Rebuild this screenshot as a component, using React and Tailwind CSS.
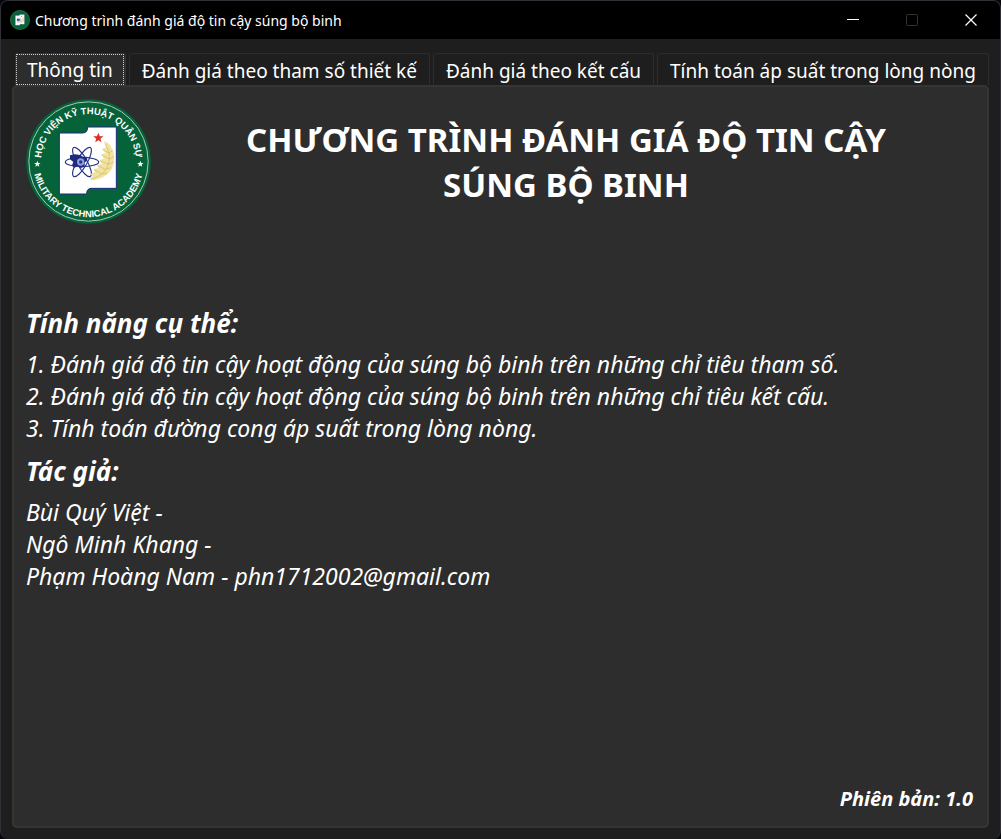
import { useState } from "react";

const TABS = [
  "Thông tin",
  "Đánh giá theo tham số thiết kế",
  "Đánh giá theo kết cấu",
  "Tính toán áp suất trong lòng nòng",
];

const FEATURES = [
  "1. Đánh giá độ tin cậy hoạt động của súng bộ binh trên những chỉ tiêu tham số.",
  "2. Đánh giá độ tin cậy hoạt động của súng bộ binh trên những chỉ tiêu kết cấu.",
  "3. Tính toán đường cong áp suất trong lòng nòng.",
];

const AUTHORS = ["Bùi Quý Việt -", "Ngô Minh Khang -", "Phạm Hoàng Nam - phn1712002@gmail.com"];

const STAR = "M0 -10 L2.6 -3.2 L9.5 -3.1 L4 1.3 L5.9 8.1 L0 4.2 L-5.9 8.1 L-4 1.3 L-9.5 -3.1 L-2.6 -3.2 Z";

function Emblem() {
  return (
    <>
      <path
        d="M118 114 H188 Q203 114 203 96 H289 V280 H213 Q200 281 200 297 H118 Z"
        fill="#ffffff"
        stroke="#1e2a86"
        strokeWidth="3"
      />
      <g fill="none" stroke="#27348b" strokeWidth="3.5">
        <ellipse cx="186" cy="201" rx="50" ry="14" />
        <ellipse cx="186" cy="201" rx="50" ry="15" transform="rotate(60 186 201)" />
        <ellipse cx="186" cy="201" rx="50" ry="15" transform="rotate(120 186 201)" />
      </g>
      <path d="M150 181 L165 178 L181 180 L190 187 L200 185 L202 196 L194 203 L194 214 L183 219 L172 214 L162 219 L156 211 L160 201 L150 193 Z" fill="#1f2b80" />
      <circle cx="182" cy="201" r="11" fill="#8ea0d8" />
      <circle cx="182" cy="201" r="5" fill="#27348b" />
      <path
        d="M252 139 Q270 143 275 160 Q285 177 282 198 Q279 225 260 240 Q243 252 222 256 L208 253 L219 243 L210 238 L225 231 L220 222 L237 220 L232 210 L246 206 L239 195 L252 191 L244 178 L257 174 L247 162 L258 157 Z"
        fill="#f0e3a4"
      />
      <path
        d="M256 146 Q279 184 260 220 Q245 244 214 252 M248 164 L267 174 L279 166 M245 180 L269 192 L282 184 M240 198 L267 208 L280 202 M232 212 L257 223 L272 218 M223 224 L245 237 L261 234"
        fill="none"
        stroke="#d9c266"
        strokeWidth="2.5"
      />
      <path d={STAR} transform="translate(235 129) scale(1.6)" fill="#dc2d27" />
    </>
  );
}

function AcademyLogo({ className, detailed }) {
  return (
    <svg viewBox="18 12 375 375" className={className} role="img" aria-label="Học viện Kỹ thuật Quân sự">
      <circle cx="205.500" cy="199.500" r="187" fill="#066239" />
      <circle cx="205.500" cy="199.500" r="179" fill="none" stroke="#a9c8b6" strokeWidth="3" />
      {detailed && (
        <g
          fill="#ffffff"
          fontFamily="'Liberation Sans', Arial, sans-serif"
          fontWeight="700"
        >
          <path id="arc-top" d="M63 200 A142.500 142.500 0 0 1 348 200" fill="none" />
          <path id="arc-bottom" d="M39 200 A166.500 166.500 0 0 0 372 200" fill="none" />
          <text fontSize="28" textAnchor="middle">
            <textPath href="#arc-top" startOffset="50%">HỌC VIỆN KỸ THUẬT QUÂN SỰ</textPath>
          </text>
          <text fontSize="28" textAnchor="middle">
            <textPath href="#arc-bottom" startOffset="50%">MILITARY TECHNICAL ACADEMY</textPath>
          </text>
          <path d={STAR} transform="translate(52 207)" />
          <path d={STAR} transform="translate(361 207)" />
        </g>
      )}
      <Emblem />
    </svg>
  );
}

function TitleBar() {
  return (
    <header className="flex h-[38px] items-center bg-black pl-[9px]">
      <AcademyLogo className="size-5 shrink-0" />
      <span className="ml-[5px] flex-1 truncate text-[14px]">Chương trình đánh giá độ tin cậy súng bộ binh</span>
      <div className="flex h-full shrink-0">
        <button type="button" aria-label="Thu nhỏ" className="flex w-[58px] items-center justify-center">
          <svg viewBox="0 0 12 12" className="size-3"><path d="M0 5.500H12" stroke="#fff" /></svg>
        </button>
        <button type="button" aria-label="Phóng to" disabled className="flex w-[60px] items-center justify-center">
          <svg viewBox="0 0 12 12" className="size-3"><rect x=".5" y=".5" width="11" height="11" rx="1" fill="none" stroke="#333" /></svg>
        </button>
        <button type="button" aria-label="Đóng" className="flex w-[58px] items-center justify-center">
          <svg viewBox="0 0 12 12" className="size-3"><path d="M.5 .5L11.500 11.500M11.500 .5L.5 11.500" stroke="#fff" strokeWidth="1.200" /></svg>
        </button>
      </div>
    </header>
  );
}

function Section({ title, lines }) {
  return (
    <section className="flex flex-col gap-2">
      <h2 className="text-[26px] leading-[34px] font-bold">{title}</h2>
      <ul className="text-[23px] leading-8">
        {lines.map((line) => (
          <li key={line}>{line}</li>
        ))}
      </ul>
    </section>
  );
}

export default function App() {
  const [active, setActive] = useState(0);
  return (
    <div className="flex min-h-screen flex-col bg-[#05050c] font-['Noto_Sans','Open_Sans',sans-serif] text-white">
      <div className="flex flex-1 flex-col overflow-hidden rounded-lg border border-[#303036] border-b-0 bg-[#1e1e1e]">
        <TitleBar />
        <main className="flex flex-1 flex-col px-[11px] pt-[14px] pb-[11px]">
          <div role="tablist" className="flex gap-[3px] px-[3px]">
            {TABS.map((tab, i) => (
              <button
                key={tab}
                type="button"
                role="tab"
                id={`tab-${i}`}
                aria-selected={active === i}
                aria-controls="panel"
                onClick={() => setActive(i)}
                className={
                  active === i
                    ? "h-8 rounded-t-[3px] border border-[#353535] border-b-0 bg-[#2d2d2d] pr-px text-[19px] whitespace-nowrap"
                    : "h-8 rounded-t-[3px] border border-[#2d2d2d] border-b-0 px-3 pt-[3px] text-[19px] whitespace-nowrap"
                }
              >
                {active === i ? (
                  <span className="flex h-full items-center border border-dotted border-[#d0d0d0] px-[10px] pt-0.5">{tab}</span>
                ) : (
                  tab
                )}
              </button>
            ))}
          </div>
          <div
            role="tabpanel"
            id="panel"
            aria-labelledby={`tab-${active}`}
            className="flex flex-1 flex-col rounded-[5px] border-2 border-[#353535] bg-[#2d2d2d] px-3 pt-3 pb-[11px]"
          >
            <div className="flex items-center">
              <AcademyLogo detailed className="size-[125px] shrink-0" />
              <h1 className="flex-1 pr-16 pl-[70px] text-center text-[33px] leading-[45px] font-bold">
                CHƯƠNG TRÌNH ĐÁNH GIÁ ĐỘ TIN CẬY SÚNG BỘ BINH
              </h1>
            </div>
            <div className="mt-[82px] flex flex-col gap-2.5 italic">
              <Section title="Tính năng cụ thể:" lines={FEATURES} />
              <Section title="Tác giả:" lines={AUTHORS} />
            </div>
            <p className="mt-auto pr-0.5 text-right text-[20px] leading-8 font-bold italic">Phiên bản: 1.0</p>
          </div>
        </main>
      </div>
    </div>
  );
}
